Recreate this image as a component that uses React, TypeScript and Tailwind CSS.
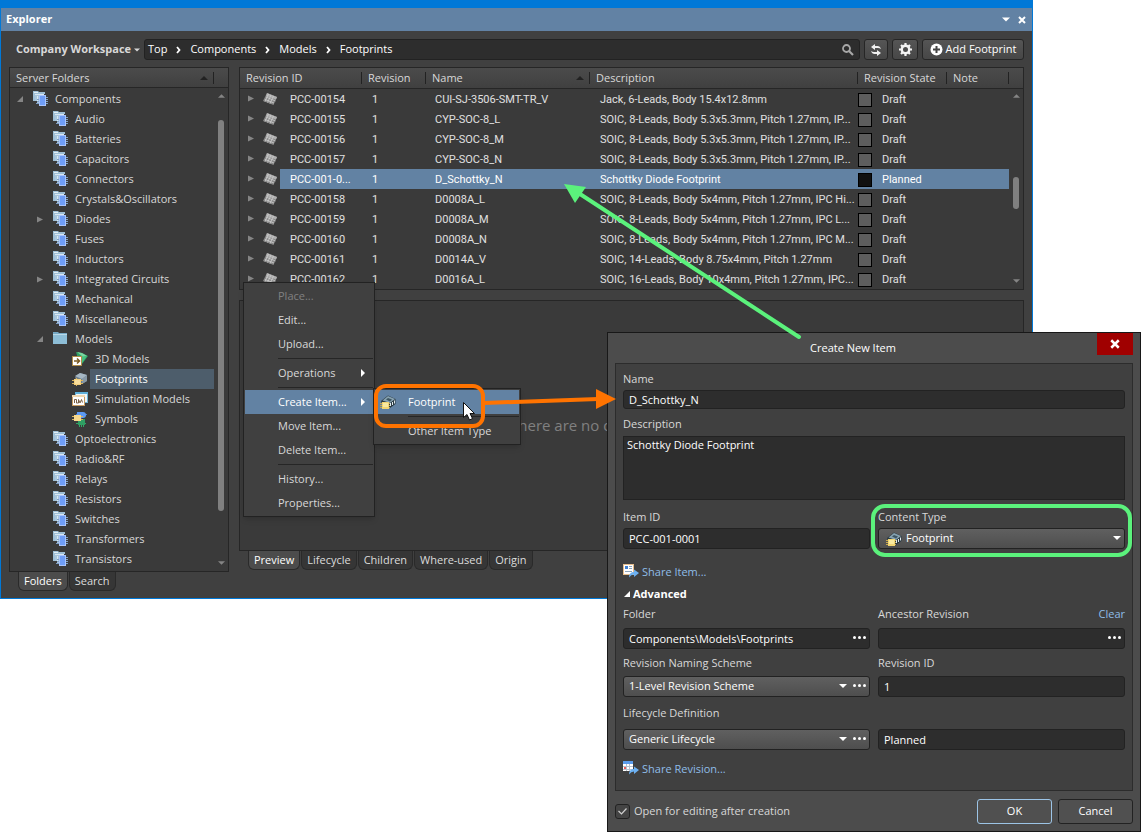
import React from 'react';
import clsx from 'clsx';

type TreeNode = {
    label: string;
    level: 0 | 1 | 2;
    icon: 'parts' | 'folder' | 'model3d' | 'footprint' | 'simulation' | 'symbol';
    state?: 'open' | 'closed';
    selected?: boolean;
};

const tree: TreeNode[] = [
    { label: 'Components', level: 0, icon: 'parts', state: 'open' },
    { label: 'Audio', level: 1, icon: 'parts' },
    { label: 'Batteries', level: 1, icon: 'parts' },
    { label: 'Capacitors', level: 1, icon: 'parts' },
    { label: 'Connectors', level: 1, icon: 'parts' },
    { label: 'Crystals&Oscillators', level: 1, icon: 'parts' },
    { label: 'Diodes', level: 1, icon: 'parts', state: 'closed' },
    { label: 'Fuses', level: 1, icon: 'parts' },
    { label: 'Inductors', level: 1, icon: 'parts' },
    { label: 'Integrated Circuits', level: 1, icon: 'parts', state: 'closed' },
    { label: 'Mechanical', level: 1, icon: 'parts' },
    { label: 'Miscellaneous', level: 1, icon: 'parts' },
    { label: 'Models', level: 1, icon: 'folder', state: 'open' },
    { label: '3D Models', level: 2, icon: 'model3d' },
    { label: 'Footprints', level: 2, icon: 'footprint', selected: true },
    { label: 'Simulation Models', level: 2, icon: 'simulation' },
    { label: 'Symbols', level: 2, icon: 'symbol' },
    { label: 'Optoelectronics', level: 1, icon: 'parts' },
    { label: 'Radio&RF', level: 1, icon: 'parts' },
    { label: 'Relays', level: 1, icon: 'parts' },
    { label: 'Resistors', level: 1, icon: 'parts' },
    { label: 'Switches', level: 1, icon: 'parts' },
    { label: 'Transformers', level: 1, icon: 'parts' },
    { label: 'Transistors', level: 1, icon: 'parts' },
];

const items = [
    { id: 'PCC-00154', name: 'CUI-SJ-3506-SMT-TR_V', description: 'Jack, 6-Leads, Body 15.4x12.8mm', state: 'Draft' },
    { id: 'PCC-00155', name: 'CYP-SOC-8_L', description: 'SOIC, 8-Leads, Body 5.3x5.3mm, Pitch 1.27mm, IP...', state: 'Draft' },
    { id: 'PCC-00156', name: 'CYP-SOC-8_M', description: 'SOIC, 8-Leads, Body 5.3x5.3mm, Pitch 1.27mm, IP...', state: 'Draft' },
    { id: 'PCC-00157', name: 'CYP-SOC-8_N', description: 'SOIC, 8-Leads, Body 5.3x5.3mm, Pitch 1.27mm, IP...', state: 'Draft' },
    { id: 'PCC-001-0...', name: 'D_Schottky_N', description: 'Schottky Diode Footprint', state: 'Planned' },
    { id: 'PCC-00158', name: 'D0008A_L', description: 'SOIC, 8-Leads, Body 5x4mm, Pitch 1.27mm, IPC Hi...', state: 'Draft' },
    { id: 'PCC-00159', name: 'D0008A_M', description: 'SOIC, 8-Leads, Body 5x4mm, Pitch 1.27mm, IPC L...', state: 'Draft' },
    { id: 'PCC-00160', name: 'D0008A_N', description: 'SOIC, 8-Leads, Body 5x4mm, Pitch 1.27mm, IPC M...', state: 'Draft' },
    { id: 'PCC-00161', name: 'D0014A_V', description: 'SOIC, 14-Leads, Body 8.75x4mm, Pitch 1.27mm', state: 'Draft' },
    { id: 'PCC-00162', name: 'D0016A_L', description: 'SOIC, 16-Leads, Body 10x4mm, Pitch 1.27mm, IPC...', state: 'Draft' },
];

const columns = ['Revision ID', 'Revision', 'Name', 'Description', 'Revision State', 'Note'];

/* ---------- icons ---------- */

const PartsIcon = () => (
    <svg width="16" height="16" viewBox="0 1 16 16" className="shrink-0">
        <path d="M0 1h5l1 1h6v2H2v7H0z" fill="#9fbfd6" />
        <path d="M1 2h4v1H1z" fill="#e2eef5" />
        <path d="M2 4h9v9H4V11H2z" fill="#a9c6dc" />
        <path d="M2 4h9v1H2zM4 6h1v6H4z" fill="#d9e8f2" />
        <path d="M3 13.500h3M13 7.500h2M13 9.500h2M13 11.500h2M13 13.500h2M4 11.500h2M4 9.500h2" stroke="#7f9fc4" />
        <rect x="6.500" y="5.500" width="6" height="10" fill="#6f9df6" stroke="#a9c4fb" />
    </svg>
);

const FolderIcon = () => (
    <svg width="16" height="16" viewBox="0 1 16 16" className="shrink-0">
        <path d="M0 2h5l1 1h8v11H0z" fill="#76a8c4" />
        <path d="M0 5h14v9H0z" fill="#8dbdd6" />
        <path d="M0 4.500h14" stroke="#b9d8e7" />
    </svg>
);

const Model3dIcon = () => (
    <svg width="16" height="16" viewBox="0 0 16 16" className="shrink-0">
        <path d="M4 1l6 1 6 3-6 8-4-5z" fill="#2f9e63" />
        <path d="M5 1l5 1 5 3-4 1z" fill="#79d6a0" />
        <path d="M8 6l7-1-5 7z" fill="#45c07e" />
        <rect x="0.500" y="5.500" width="9" height="9" fill="#fff" stroke="#b08d4a" />
        <path d="M2 10h5M5 7.500L7.500 10 5 12.500" fill="none" stroke="#7a5a20" strokeWidth="1.500" />
    </svg>
);

const FootprintIcon = () => (
    <svg width="16" height="16" viewBox="0 0 16 16" className="shrink-0">
        <path d="M3 6l5-4 7 2v6l-5 3-6-3z" fill="#6d7f8e" />
        <path d="M3 5l5-3 7 2-5 4z" fill="#a6b7c3" />
        <path d="M10 8l5-4v6l-5 3z" fill="#8798a5" />
        <path d="M0 9.500h11M0 12.500h11M4.500 7v8" stroke="#d9b25c" />
        <rect x="2" y="8" width="7" height="6" fill="#f3cf7b" />
        <rect x="3" y="9" width="5" height="4" fill="#f9de9d" />
    </svg>
);

const FootprintChipIcon = () => (
    <svg width="16" height="16" viewBox="0 0 16 16" className="shrink-0">
        <path d="M1 7l7-5.500L15.500 5v5L10 14 2 10z" fill="#2b3a42" />
        <path d="M2.500 6.500L8 2l7 3-5 4z" fill="#86a2b1" />
        <path d="M6 5.500l2-1.500 4 1.500-2 2z" fill="#3e5663" />
        <path d="M10.500 9v3M12.500 8v3M14.500 6.500v3" stroke="#dfe9ee" />
        <path d="M0 9.500h10M0 11.500h10M0 13.500h10" stroke="#c9a84c" />
        <rect x="2" y="8" width="7" height="7" fill="#f1d572" />
        <rect x="3" y="9" width="5" height="4" fill="#faea9f" />
    </svg>
);

const SimulationIcon = () => (
    <svg width="16" height="16" viewBox="0 0 16 16" className="shrink-0">
        <rect x="3.500" y="1.500" width="12" height="10" fill="#eef7fb" stroke="#6fb3d3" />
        <path d="M3 1h13v2H3z" fill="#5fb0da" />
        <rect x="0.500" y="4.500" width="12" height="10" fill="#fff" stroke="#c79c62" />
        <path d="M0 4h13v2H0z" fill="#f0d7b0" />
        <path d="M2.500 12V8.500h2V12h2V8.500L8 12l1.500-3.500 1 3" fill="none" stroke="#7a6045" />
    </svg>
);

const SymbolIcon = () => (
    <svg width="16" height="16" viewBox="0 0 16 16" className="shrink-0">
        <path d="M4 3.500h11M9 1v7" stroke="#3f7fe0" />
        <path d="M5 1h6a3 3 0 0 1 0 6H5z" fill="#5c9af5" />
        <path d="M4 12.500h10M7.500 8v8M9.500 8v8M11.500 8v8" stroke="#2fa866" />
        <rect x="6" y="8" width="7" height="6" fill="#2f9e63" />
        <path d="M0 5.500h11M0 8.500h11" stroke="#d9b25c" />
        <rect x="2" y="4" width="7" height="6" fill="#f6d88e" />
    </svg>
);

const treeIcons = {
    parts: <PartsIcon />,
    folder: <FolderIcon />,
    model3d: <Model3dIcon />,
    footprint: <FootprintIcon />,
    simulation: <SimulationIcon />,
    symbol: <SymbolIcon />,
};

const ChipIcon = () => (
    <svg width="14" height="14" viewBox="0 0 14 14" className="shrink-0">
        <path d="M4 1l10 4-3.500 8L0 9z" fill="#8a8a8a" />
        <path d="M4 1l10 4-1 2.500L3 4z" fill="#b0b0b0" />
        <path d="M5.500 2L2 9.500M8 3L4.500 10.500M10.500 4L7 11.500M3 5l9.500 4M2 7.500l9 3.500" stroke="#cdcdcd" strokeWidth="0.800" />
    </svg>
);

const Twisty = ({ state }: { state: 'open' | 'closed' }) => (
    <svg width="7" height="7" viewBox="0 0 7 7" className="shrink-0">
        <path d={state === 'open' ? 'M6 0v6H0z' : 'M0 0.500l6 3-6 3z'} fill="#858585" />
    </svg>
);

const Triangle = ({ up, className }: { up?: boolean; className?: string }) => (
    <svg width="8" height="4" viewBox="0 0 8 4" className={clsx('shrink-0', className)}>
        <path d={up ? 'M0 4l4-4 4 4z' : 'M0 0h8l-4 4z'} fill="currentColor" />
    </svg>
);

const Chevron = () => (
    <svg width="5" height="8" viewBox="0 0 5 8" className="shrink-0">
        <path d="M1 1l2.500 3L1 7" fill="none" stroke="#fff" strokeWidth="1.800" />
    </svg>
);

const CrossIcon = ({ size }: { size: number }) => (
    <svg width={size} height={size} viewBox="0 0 8 8">
        <path d="M1 1l6 6M7 1L1 7" stroke="#fff" strokeWidth="2" />
    </svg>
);

const DotsIcon = () => (
    <svg width="13" height="3" viewBox="0 0 13 3">
        <circle cx="1.500" cy="1.500" r="1.500" fill="#fff" />
        <circle cx="6.500" cy="1.500" r="1.500" fill="#fff" />
        <circle cx="11.500" cy="1.500" r="1.500" fill="#fff" />
    </svg>
);

const SyncIcon = () => (
    <svg width="12" height="12" viewBox="0 0 12 12">
        <path d="M1 3l4-3v2h2.500q2.500 0 3.500 3Q9.500 4 8 4H5v2z" fill="#f0f0f0" />
        <path d="M11 9l-4 3v-2H4.500Q2 10 1 7q1.500 1 3 1h3V6z" fill="#f0f0f0" />
    </svg>
);

const GearIcon = () => (
    <svg width="13" height="13" viewBox="0 0 13 13">
        <circle cx="6.500" cy="6.500" r="3.700" fill="none" stroke="#f5f5f5" strokeWidth="2.400" />
        <path d="M6.500 0v2.500M6.500 10.500V13M0 6.500h2.500M10.500 6.500H13M2 2l1.600 1.600M9.400 9.400L11 11M11 2L9.400 3.600M3.600 9.400L2 11" stroke="#f5f5f5" strokeWidth="2.200" />
    </svg>
);

const PlusIcon = () => (
    <svg width="13" height="13" viewBox="0 0 13 13">
        <circle cx="6.500" cy="6.500" r="6" fill="#fff" />
        <path d="M6.500 3v7M3 6.500h7" stroke="#444" strokeWidth="2" />
    </svg>
);

const SearchIcon = () => (
    <svg width="12" height="12" viewBox="0 0 12 12">
        <circle cx="4.500" cy="4.500" r="3.500" fill="none" stroke="#a8a8a8" strokeWidth="1.800" />
        <path d="M7 7l4 4" stroke="#a8a8a8" strokeWidth="2.200" />
    </svg>
);

const ShareIcon = ({ kind }: { kind: 'item' | 'revision' }) => (
    <svg width="16" height="16" viewBox="0 2 16 16" className="shrink-0">
        {kind === 'item' ? (
            <>
                <rect x="0.500" y="2.500" width="10" height="10" fill="#fff" stroke="#e5bd8c" />
                <path d="M2 4h3v3H2z" fill="#3f7fd0" />
                <path d="M6 4.500h3M6 6.500h3M2 9.500h7" stroke="#8ca3ba" />
            </>
        ) : (
            <>
                <rect x="0" y="2" width="10" height="10" fill="#fff" />
                <path d="M0 2h10v3H0z" fill="#5b9bea" />
                <path d="M0 7.500h10M0 10.500h10M3.500 5v7M6.500 5v7" stroke="#b8c3d0" />
                <path d="M1 8h2v2H1z" fill="#e35a5a" />
            </>
        )}
        <path d="M6 15.500Q6 10 11 10V7.500l5 3.500-5 4v-2.500q-3 0-5 3z" fill="#6db1f2" />
    </svg>
);

/* ---------- explorer ---------- */

const Scrollbar = ({ thumb }: { thumb: string }) => (
    <div className="absolute right-0 top-5 bottom-0 w-[14px] flex flex-col items-center pt-[6px] pb-[6px] text-[#858585]">
        <Triangle up className="w-[7px]" />
        <div className="relative flex-1 w-[6px]">
            <div className={clsx('absolute left-0 w-[6px] rounded-full bg-[#808080]', thumb)} />
        </div>
        <Triangle className="w-[7px]" />
    </div>
);

const Tabs = ({ tabs }: { tabs: string[] }) => (
    <div role="tablist" className="flex gap-px pl-[9px]">
        {tabs.map((tab, idx) => (
            <button
                key={tab}
                role="tab"
                aria-selected={idx === 0}
                className={clsx(
                    'h-[19px] px-[5px] rounded-b-md border border-t-0 border-[#2a2a2a] leading-4',
                    idx === 0 ? 'bg-[#4c4c4c] text-white' : 'bg-[#363636] text-[#dcdcdc]'
                )}
            >
                {tab}
            </button>
        ))}
    </div>
);

const FolderTree = () => (
    <div className="w-[220px] shrink-0">
        <div className="relative border border-[#262626] bg-[#3a3a3a] pb-[2px]">
            <div className="h-5 flex items-center pl-[6px] pt-px border-b border-[#262626] bg-linear-to-b from-[#4b4b4b] to-[#404040]">
                <span className="flex-1">Server Folders</span>
                <Triangle up className="text-[#222] mr-[5px]" />
                <span className="h-3 w-[15px] border-l border-[#222]" />
            </div>
            <ul className="pt-px pr-[14px]">
                {tree.map((node) => (
                    <li key={node.label} className="h-5">
                        <button
                            className={clsx(
                                'flex w-full h-5 items-center text-left',
                                node.level === 0 && 'pl-[7px]',
                                node.level === 1 && 'pl-[27px]',
                                node.level === 2 && 'pl-[46px]'
                            )}
                        >
                            <span className="w-4 shrink-0">{node.state && <Twisty state={node.state} />}</span>
                            {treeIcons[node.icon]}
                            <span className={clsx('flex-1 ml-[2px] leading-5', node.level === 2 ? 'pl-[5px]' : 'pl-1', node.selected && 'bg-[#4d5d6b] text-white')}>
                                {node.label}
                            </span>
                        </button>
                    </li>
                ))}
            </ul>
            <Scrollbar thumb="top-[22px] bottom-[50px]" />
        </div>
        <Tabs tabs={['Folders', 'Search']} />
    </div>
);

const RevisionTable = () => (
    <div className="relative border border-[#262626] bg-[#3a3a3a]">
        <table className="w-full table-fixed border-collapse">
            <colgroup>
                <col className="w-[122px]" />
                <col className="w-16" />
                <col className="w-[164px]" />
                <col />
                <col className="w-[89px]" />
                <col className="w-[62px]" />
                <col className="w-[14px]" />
            </colgroup>
            <thead>
                <tr className="bg-linear-to-b from-[#4b4b4b] to-[#404040]">
                    {columns.map((column) => (
                        <th key={column} scope="col" className="h-5 p-0 pt-px border-b border-[#262626] font-normal text-left">
                            <div className="h-3 flex items-center pl-[6px] border-r border-[#222] leading-3">
                                <span className="flex-1">{column}</span>
                                {column === 'Name' && <Triangle up className="text-[#222] mr-[5px]" />}
                            </div>
                        </th>
                    ))}
                    <td className="p-0 border-b border-[#262626]" />
                </tr>
            </thead>
            <tbody className="font-[Roboto,sans-serif] leading-[18px] whitespace-nowrap text-[#e0e0e0]">
                {items.map((item) => {
                    const bg = item.state === 'Planned' && 'bg-[#6282a3] text-white';
                    return (
                        <tr key={item.id}>
                            <td className="p-0">
                                <div className="h-5 flex items-center pl-2">
                                    <Twisty state="closed" />
                                    <span className="ml-2 mr-[3px]"><ChipIcon /></span>
                                    <span className={clsx('flex-1 h-5 pl-[10px] pt-[2px] overflow-hidden', bg)}>{item.id}</span>
                                </div>
                            </td>
                            <td className={clsx('p-0 pt-[2px] pl-[10px]', bg)}>1</td>
                            <td className={clsx('p-0 pt-[2px] pl-[9px]', bg)}>{item.name}</td>
                            <td className={clsx('p-0 pt-[2px] pl-[10px] overflow-hidden', bg)}>{item.description}</td>
                            <td className={clsx('p-0 pt-[2px]', bg)}>
                                <div className="flex items-center gap-[10px]">
                                    <span className={clsx('size-[14px] border border-black', item.state === 'Planned' ? 'bg-[#111]' : 'bg-[#5e5e5e]')} />
                                    {item.state}
                                </div>
                            </td>
                            <td className={clsx('p-0', bg)} />
                            <td className="p-0" />
                        </tr>
                    );
                })}
            </tbody>
        </table>
        <Scrollbar thumb="top-[79px] h-8" />
    </div>
);

const toolButton = 'h-[21px] flex items-center justify-center rounded-[3px] border border-[#262626] bg-linear-to-b from-[#555] to-[#474747] text-white';

const ExplorerWindow = () => (
    <main className="mr-[108px] border border-t-8 border-[#0078d7] bg-[#404040]">
        <header className="h-[23px] flex items-center pl-[5px] pr-[6px] bg-[#6282a4] text-white">
            <h1 className="flex-1 font-bold text-[11px]">Explorer</h1>
            <button aria-label="Window options" className="mr-2"><Triangle className="h-[5px]" /></button>
            <button aria-label="Close explorer"><CrossIcon size={8} /></button>
        </header>
        <div className="flex gap-1 pt-2 pb-[7px] pl-[15px] pr-2">
            <button className="w-[124px] flex items-center gap-[3px] font-bold whitespace-nowrap">
                Company Workspace
                <Triangle className="w-[6px]" />
            </button>
            <nav aria-label="Breadcrumb" className="flex-1 h-[21px] flex items-center gap-[9px] pl-[3px] pr-[5px] rounded-[3px] border border-[#222] bg-[#2d2d2d] text-white">
                <a href="#top">Top</a>
                <Chevron />
                <a href="#components">Components</a>
                <Chevron />
                <a href="#models">Models</a>
                <Chevron />
                <a href="#footprints" className="flex-1">Footprints</a>
                <button aria-label="Search"><SearchIcon /></button>
            </nav>
            <button aria-label="Refresh" className={clsx(toolButton, 'w-6')}><SyncIcon /></button>
            <button aria-label="Settings" className={clsx(toolButton, 'w-[26px]')}><GearIcon /></button>
            <button className={clsx(toolButton, 'gap-[3px] px-[6px] w-[102px] whitespace-nowrap')}>
                <PlusIcon />
                Add Footprint
            </button>
        </div>
        <div className="flex gap-[10px] pl-2 pr-2 pb-[7px]">
            <FolderTree />
            <div className="flex-1 min-w-0 flex flex-col">
                <RevisionTable />
                <section className="flex-1 mt-[10px] flex items-center pl-[270px] border border-[#262626] bg-[#3a3a3a] text-[15px] text-[#808080] whitespace-nowrap">
                    There are no d
                </section>
                <div className="mb-[21px]">
                    <Tabs tabs={['Preview', 'Lifecycle', 'Children', 'Where-used', 'Origin']} />
                </div>
            </div>
        </div>
    </main>
);

/* ---------- menus ---------- */

const MenuItem = ({ label, arrow, active, disabled, icon }: { label: string; arrow?: boolean; active?: boolean; disabled?: boolean; icon?: React.ReactNode }) => (
    <button
        role="menuitem"
        disabled={disabled}
        className={clsx('w-full h-6 flex items-center pr-2 text-left whitespace-nowrap', active && 'bg-[#6282a3] text-white', disabled && 'text-[#808080]')}
    >
        <span className="w-[33px] pl-[5px] shrink-0">{icon}</span>
        <span className="flex-1">{label}</span>
        {arrow && (
            <svg width="4" height="8" viewBox="0 0 4 8">
                <path d="M0 0l4 4-4 4z" fill="#fff" />
            </svg>
        )}
    </button>
);

const MenuSeparator = () => <div role="separator" className="ml-[33px] my-[2px] h-px bg-[#262626]" />;

const ContextMenu = () => (
    <>
        <div role="menu" className="absolute left-[243px] top-[282px] w-[132px] p-px border border-[#222] bg-[#404040] shadow-md">
            <MenuItem label="Place..." disabled />
            <MenuItem label="Edit..." />
            <MenuItem label="Upload..." />
            <MenuSeparator />
            <MenuItem label="Operations" arrow />
            <MenuSeparator />
            <MenuItem label="Create Item..." arrow active />
            <MenuItem label="Move Item..." />
            <MenuItem label="Delete Item..." />
            <MenuSeparator />
            <MenuItem label="History..." />
            <MenuItem label="Properties..." />
        </div>
        <div role="menu" className="absolute left-[373px] top-[388px] w-[148px] p-px border border-[#222] bg-[#404040] shadow-md">
            <MenuItem label="Footprint" active icon={<FootprintChipIcon />} />
            <MenuSeparator />
            <MenuItem label="Other Item Type" />
        </div>
    </>
);

/* ---------- dialog ---------- */

const fieldBox = 'block w-full rounded-[3px] border border-[#222] bg-[#2d2d2d] pb-px text-white outline-none';
const selectBox = 'block w-full h-[21px] appearance-none rounded-[3px] border border-[#222] bg-linear-to-b from-[#606060] to-[#4e4e4e] text-white outline-none';

const MoreButton = ({ label }: { label: string }) => (
    <button aria-label={label} className="absolute right-1 top-[3px] h-3 w-[14px] flex items-center justify-center">
        <DotsIcon />
    </button>
);

const SchemeSelect = ({ id, value, more }: { id: string; value: string; more: string }) => (
    <div className="relative">
        <select id={id} className={clsx(selectBox, 'pl-[5px] pr-10')}>
            <option>{value}</option>
        </select>
        <Triangle className="absolute right-[23px] top-2 text-white pointer-events-none" />
        <MoreButton label={more} />
    </div>
);

const CreateItemDialog = () => (
    <div role="dialog" aria-labelledby="dialog-title" className="absolute left-[607px] right-0 top-[332px] border border-[#181818] bg-[#4c4c4c] pl-[7px] pr-[7px] text-[#d8d8d8]">
        <div className="flex h-[30px]">
            <h2 id="dialog-title" className="flex-1 pt-[7px] pr-[6px] text-center text-white leading-4">Create New Item</h2>
            <button aria-label="Close dialog" className="w-9 h-[22px] flex items-center justify-center bg-[#a00000]"><CrossIcon size={10} /></button>
        </div>
        <div className="border border-[#2c2c2c] bg-[#404040] px-[7px] pt-[7px] pb-[13px]">
            <label htmlFor="name" className="block leading-4">Name</label>
            <input id="name" defaultValue="D_Schottky_N" className={clsx(fieldBox, 'mt-[3px] h-[19px] px-[5px]')} />
            <label htmlFor="description" className="block mt-[7px] leading-4">Description</label>
            <textarea id="description" defaultValue="Schottky Diode Footprint" className="block mt-1 w-full h-16 px-[3px] leading-4 resize-none border border-[#222] bg-[#2d2d2d] text-white outline-none" />
            <div className="grid grid-cols-2 gap-x-2 mt-[9px]">
                <div>
                    <label htmlFor="item-id" className="block leading-4">Item ID</label>
                    <input id="item-id" defaultValue="PCC-001-0001" className={clsx(fieldBox, 'mt-[3px] h-[21px] px-[5px]')} />
                </div>
                <div>
                    <label htmlFor="content-type" className="block leading-4">Content Type</label>
                    <div className="relative mt-[3px]">
                        <select id="content-type" className={clsx(selectBox, 'pl-[27px] pr-6')}>
                            <option>Footprint</option>
                        </select>
                        <span className="absolute left-2 top-[3px] pointer-events-none"><FootprintChipIcon /></span>
                        <Triangle className="absolute right-1 top-2 text-white pointer-events-none" />
                    </div>
                </div>
            </div>
            <a href="#share-item" className="mt-[15px] h-4 flex items-center gap-[3px] leading-4 text-[#8fbde8]">
                <ShareIcon kind="item" />
                Share Item...
            </a>
            <button aria-expanded="true" className="mt-[6px] h-4 flex items-center gap-[3px] pl-px font-bold text-white leading-4">
                <svg width="6" height="6" viewBox="0 0 6 6">
                    <path d="M6 0v6H0z" fill="#fff" />
                </svg>
                Advanced
            </button>
            <div className="grid grid-cols-2 gap-x-2 mt-1">
                <div>
                    <label htmlFor="folder" className="block leading-4">Folder</label>
                    <div className="relative mt-[6px]">
                        <input id="folder" defaultValue="Components\Models\Footprints" className={clsx(fieldBox, 'h-[21px] pl-[5px] pr-5')} />
                        <MoreButton label="Choose folder" />
                    </div>
                </div>
                <div>
                    <div className="flex justify-between leading-4">
                        <label htmlFor="ancestor">Ancestor Revision</label>
                        <button className="leading-4 text-[#8fbde8]">Clear</button>
                    </div>
                    <div className="relative mt-[6px]">
                        <input id="ancestor" className={clsx(fieldBox, 'h-[21px] pl-[5px] pr-5')} />
                        <MoreButton label="Choose ancestor revision" />
                    </div>
                </div>
                <div className="mt-[6px]">
                    <label htmlFor="naming" className="block mb-[5px] leading-4">Revision Naming Scheme</label>
                    <SchemeSelect id="naming" value="1-Level Revision Scheme" more="Choose naming scheme" />
                </div>
                <div className="mt-[6px]">
                    <label htmlFor="revision-id" className="block mb-[5px] leading-4">Revision ID</label>
                    <input id="revision-id" defaultValue="1" className={clsx(fieldBox, 'h-[21px] px-[5px]')} />
                </div>
                <label htmlFor="lifecycle" className="col-span-2 mt-2 mb-2 leading-4">Lifecycle Definition</label>
                <SchemeSelect id="lifecycle" value="Generic Lifecycle" more="Choose lifecycle" />
                <input aria-label="Lifecycle state" defaultValue="Planned" className={clsx(fieldBox, 'h-[21px] px-[5px]')} />
            </div>
            <a href="#share-revision" className="mt-[11px] h-4 flex items-center gap-[3px] leading-4 text-[#8fbde8]">
                <ShareIcon kind="revision" />
                Share Revision...
            </a>
        </div>
        <div className="flex items-center gap-[6px] pt-2 pb-[7px]">
            <label className="relative flex-1 flex items-center gap-1">
                <input type="checkbox" defaultChecked className="size-[15px] appearance-none rounded-[3px] border border-[#222] bg-[#444]" />
                <svg width="9" height="7" viewBox="0 0 9 7" className="absolute left-[3px] pointer-events-none">
                    <path d="M0.500 3L3.500 6l5-5.500" fill="none" stroke="#d0d0d0" strokeWidth="1.200" />
                </svg>
                Open for editing after creation
            </label>
            <button className="h-[25px] w-[75px] rounded-[3px] border border-[#9cc4e6] bg-[#505050] text-white">OK</button>
            <button className="h-[25px] w-[75px] rounded-[3px] border border-[#222] bg-[#505050] text-white">Cancel</button>
        </div>
    </div>
);

/* Callout frames, arrows and the mouse pointer drawn over both windows */
const Callouts = () => (
    <svg width="1141" height="832" viewBox="0 0 1141 832" className="absolute left-0 top-0 pointer-events-none">
        <g stroke="#5bf27c" strokeWidth="4" fill="none">
            <rect x="873" y="506" width="257" height="49" rx="12" />
            <path d="M799 337L580 194" strokeLinecap="round" />
        </g>
        <path d="M564 184l22 3-11 16z" fill="#5bf27c" />
        <g stroke="#ff7300" strokeWidth="4" fill="none">
            <rect x="376" y="386" width="107" height="40" rx="10" />
            <path d="M484 403l114-4" />
        </g>
        <path d="M596 389l20 10-20 10z" fill="#ff7300" />
        <path d="M463.500 402.500v15l3.500-3 2.500 5.500 3-1.500-2.500-5h4.500z" fill="#fff" stroke="#111" />
    </svg>
);

const App: React.FC = () => {
    return (
        <div className="relative min-h-screen bg-white font-['Open_Sans','Noto_Sans',sans-serif] text-[11px] text-[#d8d8d8]">
            <ExplorerWindow />
            <ContextMenu />
            <CreateItemDialog />
            <Callouts />
        </div>
    );
};

export default App;
